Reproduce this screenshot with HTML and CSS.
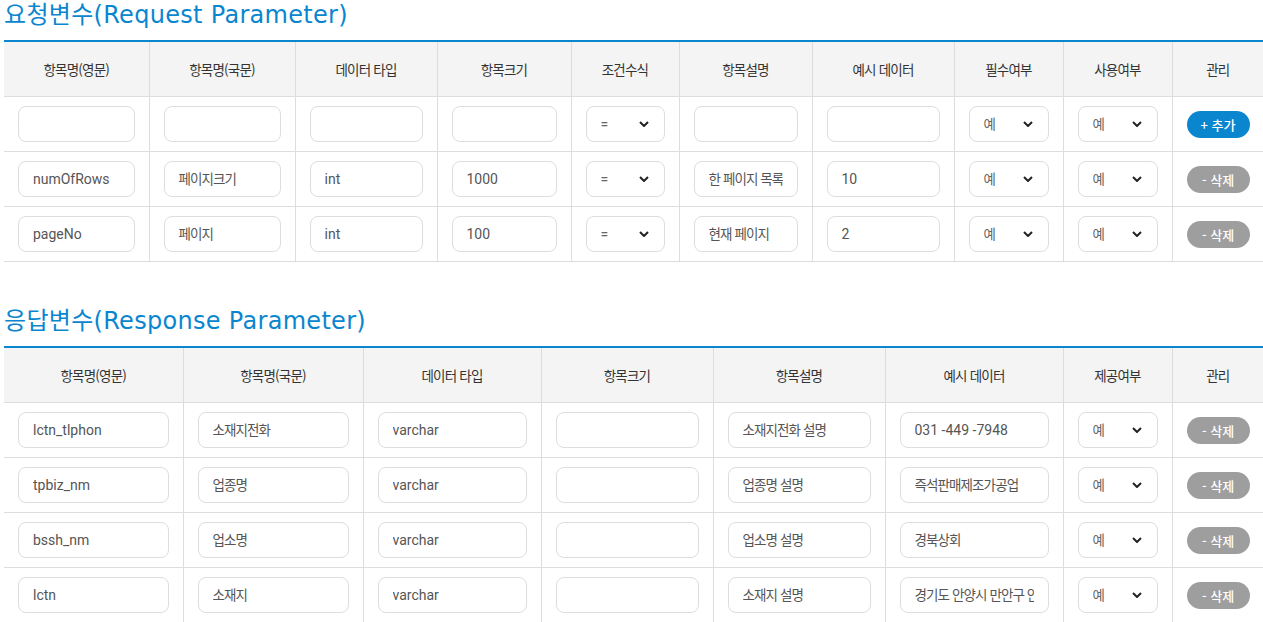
FILE: index.html
```html
<!DOCTYPE html>
<html lang="ko">
<head>
  <meta charset="UTF-8">
  <title>요청변수 / 응답변수</title>
  <link rel="stylesheet" href="styles.css">
</head>
<body>

  <h2 class="title">요청변수(Request Parameter)</h2>
  <table class="param">
    <colgroup>
      <col style="width:145px"><col style="width:146px"><col style="width:142px"><col style="width:134px"><col style="width:108px">
      <col style="width:133px"><col style="width:142px"><col style="width:109px"><col style="width:109px"><col style="width:91px">
    </colgroup>
    <thead>
      <tr>
        <th>항목명(영문)</th><th>항목명(국문)</th><th>데이터 타입</th><th>항목크기</th><th>조건수식</th>
        <th>항목설명</th><th>예시 데이터</th><th>필수여부</th><th>사용여부</th><th>관리</th>
      </tr>
    </thead>
    <tbody>
      <tr>
        <td><input type="text"></td>
        <td><input type="text"></td>
        <td><input type="text"></td>
        <td><input type="text"></td>
        <td><div class="select"><select><option>=</option></select><svg viewBox="0 0 10 6"><path d="M1 1 L5 5 L9 1"/></svg></div></td>
        <td><input type="text"></td>
        <td><input type="text"></td>
        <td><div class="select"><select class="ko"><option>예</option></select><svg viewBox="0 0 10 6"><path d="M1 1 L5 5 L9 1"/></svg></div></td>
        <td><div class="select"><select class="ko"><option>예</option></select><svg viewBox="0 0 10 6"><path d="M1 1 L5 5 L9 1"/></svg></div></td>
        <td><button class="btn add">+ 추가</button></td>
      </tr>
      <tr>
        <td><input type="text" value="numOfRows"></td>
        <td><input type="text" class="ko" value="페이지크기"></td>
        <td><input type="text" value="int"></td>
        <td><input type="text" value="1000"></td>
        <td><div class="select"><select><option>=</option></select><svg viewBox="0 0 10 6"><path d="M1 1 L5 5 L9 1"/></svg></div></td>
        <td><input type="text" class="ko" value="한 페이지 목록 수"></td>
        <td><input type="text" value="10"></td>
        <td><div class="select"><select class="ko"><option>예</option></select><svg viewBox="0 0 10 6"><path d="M1 1 L5 5 L9 1"/></svg></div></td>
        <td><div class="select"><select class="ko"><option>예</option></select><svg viewBox="0 0 10 6"><path d="M1 1 L5 5 L9 1"/></svg></div></td>
        <td><button class="btn del">- 삭제</button></td>
      </tr>
      <tr>
        <td><input type="text" value="pageNo"></td>
        <td><input type="text" class="ko" value="페이지"></td>
        <td><input type="text" value="int"></td>
        <td><input type="text" value="100"></td>
        <td><div class="select"><select><option>=</option></select><svg viewBox="0 0 10 6"><path d="M1 1 L5 5 L9 1"/></svg></div></td>
        <td><input type="text" class="ko" value="현재 페이지"></td>
        <td><input type="text" value="2"></td>
        <td><div class="select"><select class="ko"><option>예</option></select><svg viewBox="0 0 10 6"><path d="M1 1 L5 5 L9 1"/></svg></div></td>
        <td><div class="select"><select class="ko"><option>예</option></select><svg viewBox="0 0 10 6"><path d="M1 1 L5 5 L9 1"/></svg></div></td>
        <td><button class="btn del">- 삭제</button></td>
      </tr>
    </tbody>
  </table>

  <h2 class="title second">응답변수(Response Parameter)</h2>
  <table class="param">
    <colgroup>
      <col style="width:179px"><col style="width:180px"><col style="width:178px"><col style="width:172px">
      <col style="width:172px"><col style="width:178px"><col style="width:109px"><col style="width:91px">
    </colgroup>
    <thead>
      <tr>
        <th>항목명(영문)</th><th>항목명(국문)</th><th>데이터 타입</th><th>항목크기</th>
        <th>항목설명</th><th>예시 데이터</th><th>제공여부</th><th>관리</th>
      </tr>
    </thead>
    <tbody>
      <tr>
        <td><input type="text" value="lctn_tlphon"></td>
        <td><input type="text" class="ko" value="소재지전화"></td>
        <td><input type="text" value="varchar"></td>
        <td><input type="text"></td>
        <td><input type="text" class="ko" value="소재지전화 설명"></td>
        <td><input type="text" value="031 -449 -7948"></td>
        <td><div class="select"><select class="ko"><option>예</option></select><svg viewBox="0 0 10 6"><path d="M1 1 L5 5 L9 1"/></svg></div></td>
        <td><button class="btn del">- 삭제</button></td>
      </tr>
      <tr>
        <td><input type="text" value="tpbiz_nm"></td>
        <td><input type="text" class="ko" value="업종명"></td>
        <td><input type="text" value="varchar"></td>
        <td><input type="text"></td>
        <td><input type="text" class="ko" value="업종명 설명"></td>
        <td><input type="text" class="ko" value="즉석판매제조가공업"></td>
        <td><div class="select"><select class="ko"><option>예</option></select><svg viewBox="0 0 10 6"><path d="M1 1 L5 5 L9 1"/></svg></div></td>
        <td><button class="btn del">- 삭제</button></td>
      </tr>
      <tr>
        <td><input type="text" value="bssh_nm"></td>
        <td><input type="text" class="ko" value="업소명"></td>
        <td><input type="text" value="varchar"></td>
        <td><input type="text"></td>
        <td><input type="text" class="ko" value="업소명 설명"></td>
        <td><input type="text" class="ko" value="경북상회"></td>
        <td><div class="select"><select class="ko"><option>예</option></select><svg viewBox="0 0 10 6"><path d="M1 1 L5 5 L9 1"/></svg></div></td>
        <td><button class="btn del">- 삭제</button></td>
      </tr>
      <tr>
        <td><input type="text" value="lctn"></td>
        <td><input type="text" class="ko" value="소재지"></td>
        <td><input type="text" value="varchar"></td>
        <td><input type="text"></td>
        <td><input type="text" class="ko" value="소재지 설명"></td>
        <td><input type="text" class="ko" value="경기도 안양시 만안구 안양동"></td>
        <td><div class="select"><select class="ko"><option>예</option></select><svg viewBox="0 0 10 6"><path d="M1 1 L5 5 L9 1"/></svg></div></td>
        <td><button class="btn del">- 삭제</button></td>
      </tr>
    </tbody>
  </table>

</body>
</html>
```
FILE: styles.css
```css
body {
  margin: 0;
  padding: 0 0 0 4px;
  font-family: Roboto, "Noto Sans CJK KR", sans-serif;
  color: #333;
  background: #fff;
}
.title {
  margin: 0 0 10px;
  font-family: "DejaVu Sans", "Noto Sans CJK KR", sans-serif;
  font-size: 24px;
  line-height: 30px;
  letter-spacing: 0.3px;
  font-weight: 400;
  color: #0a86cf;
}
.title.second {
  margin-top: 44px;
}
.param {
  width: 1259px;
  table-layout: fixed;
  border-collapse: collapse;
  border-top: 2px solid #0a86cf;
}
.param th {
  height: 54px;
  padding: 0;
  background: #f4f4f4;
  font-family: "Noto Sans CJK KR", sans-serif;
  font-size: 13.5px;
  letter-spacing: -0.8px;
  font-weight: 400;
  color: #333;
  border-bottom: 1px solid #ddd;
}
.param td {
  height: 54px;
  padding: 0 14px;
  border-bottom: 1px solid #ddd;
  text-align: center;
}
.param th + th,
.param td + td {
  border-left: 1px solid #ddd;
}
.param input,
.param select {
  display: block;
  width: 100%;
  height: 36px;
  box-sizing: border-box;
  padding: 0 14px;
  border: 1px solid #ddd;
  border-radius: 8px;
  background: #fff;
  font-family: inherit;
  font-size: 14px;
  color: #555;
  outline: none;
}
.param .ko {
  padding-bottom: 3px;
  font-family: "Noto Sans CJK KR", sans-serif;
  font-size: 13.5px;
  letter-spacing: -0.9px;
}
.select {
  position: relative;
}
.param select {
  appearance: none;
  -webkit-appearance: none;
  color: #666;
}
.select svg {
  position: absolute;
  right: 16px;
  top: 15px;
  width: 10px;
  height: 6px;
  fill: none;
  stroke: #222;
  stroke-width: 2;
  pointer-events: none;
}
.btn {
  width: 63px;
  height: 27px;
  border: 0;
  border-radius: 14px;
  padding: 0;
  font-family: "Noto Sans CJK KR", sans-serif;
  font-size: 13px;
  font-weight: 500;
  color: #fff;
  cursor: pointer;
}
.btn.add {
  background: #0a86cf;
}
.btn.del {
  background: #9e9e9e;
}
```
